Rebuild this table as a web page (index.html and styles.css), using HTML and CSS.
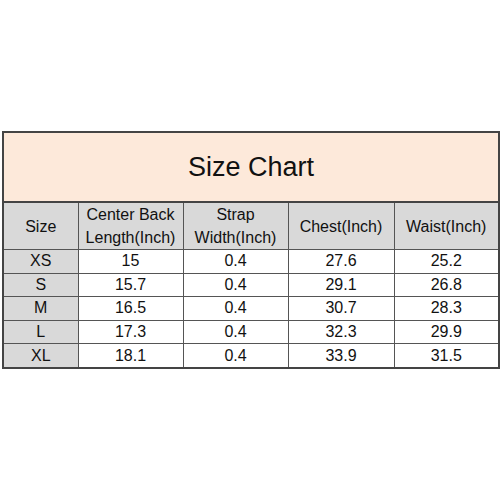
FILE: index.html
```html
<!DOCTYPE html>
<html>
<head>
<meta charset="utf-8">
<link rel="stylesheet" href="styles.css">
</head>
<body>
<table class="chart">
  <colgroup>
    <col class="c1"><col class="c2"><col class="c3"><col class="c4"><col class="c5">
  </colgroup>
  <tr class="title-row"><td colspan="5">Size Chart</td></tr>
  <tr class="head-row">
    <td>Size</td>
    <td>Center Back<br>Length(Inch)</td>
    <td>Strap<br>Width(Inch)</td>
    <td>Chest(Inch)</td>
    <td>Waist(Inch)</td>
  </tr>
  <tr class="data"><td class="size">XS</td><td>15</td><td>0.4</td><td>27.6</td><td>25.2</td></tr>
  <tr class="data"><td class="size">S</td><td>15.7</td><td>0.4</td><td>29.1</td><td>26.8</td></tr>
  <tr class="data"><td class="size">M</td><td>16.5</td><td>0.4</td><td>30.7</td><td>28.3</td></tr>
  <tr class="data"><td class="size">L</td><td>17.3</td><td>0.4</td><td>32.3</td><td>29.9</td></tr>
  <tr class="data"><td class="size">XL</td><td>18.1</td><td>0.4</td><td>33.9</td><td>31.5</td></tr>
</table>
</body>
</html>
```
FILE: styles.css
```css
html, body {
  margin: 0;
  padding: 0;
  background: #ffffff;
}
body {
  padding-top: 131px;
  padding-left: 2px;
  font-family: "Liberation Sans", Arial, sans-serif;
  color: #111;
}
.chart {
  border-collapse: collapse;
  table-layout: fixed;
  width: 496px;
  border: 2px solid #444;
}
.c1 { width: 75px; }
.c2 { width: 105px; }
.c3 { width: 105px; }
.c4 { width: 106px; }
.c5 { width: 105px; }
.chart td {
  border: 1px solid #555;
  text-align: center;
  padding: 0;
  font-size: 16px;
}
.title-row td {
  background: #fde9da;
  height: 68px;
  font-size: 27px;
  border-bottom: 2px solid #444;
}
.head-row td {
  background: #d9d9d9;
  height: 46px;
  line-height: 23px;
}
.data td {
  height: 22.6px;
  line-height: 20px;
}
.data td.size {
  background: #d9d9d9;
}
```
